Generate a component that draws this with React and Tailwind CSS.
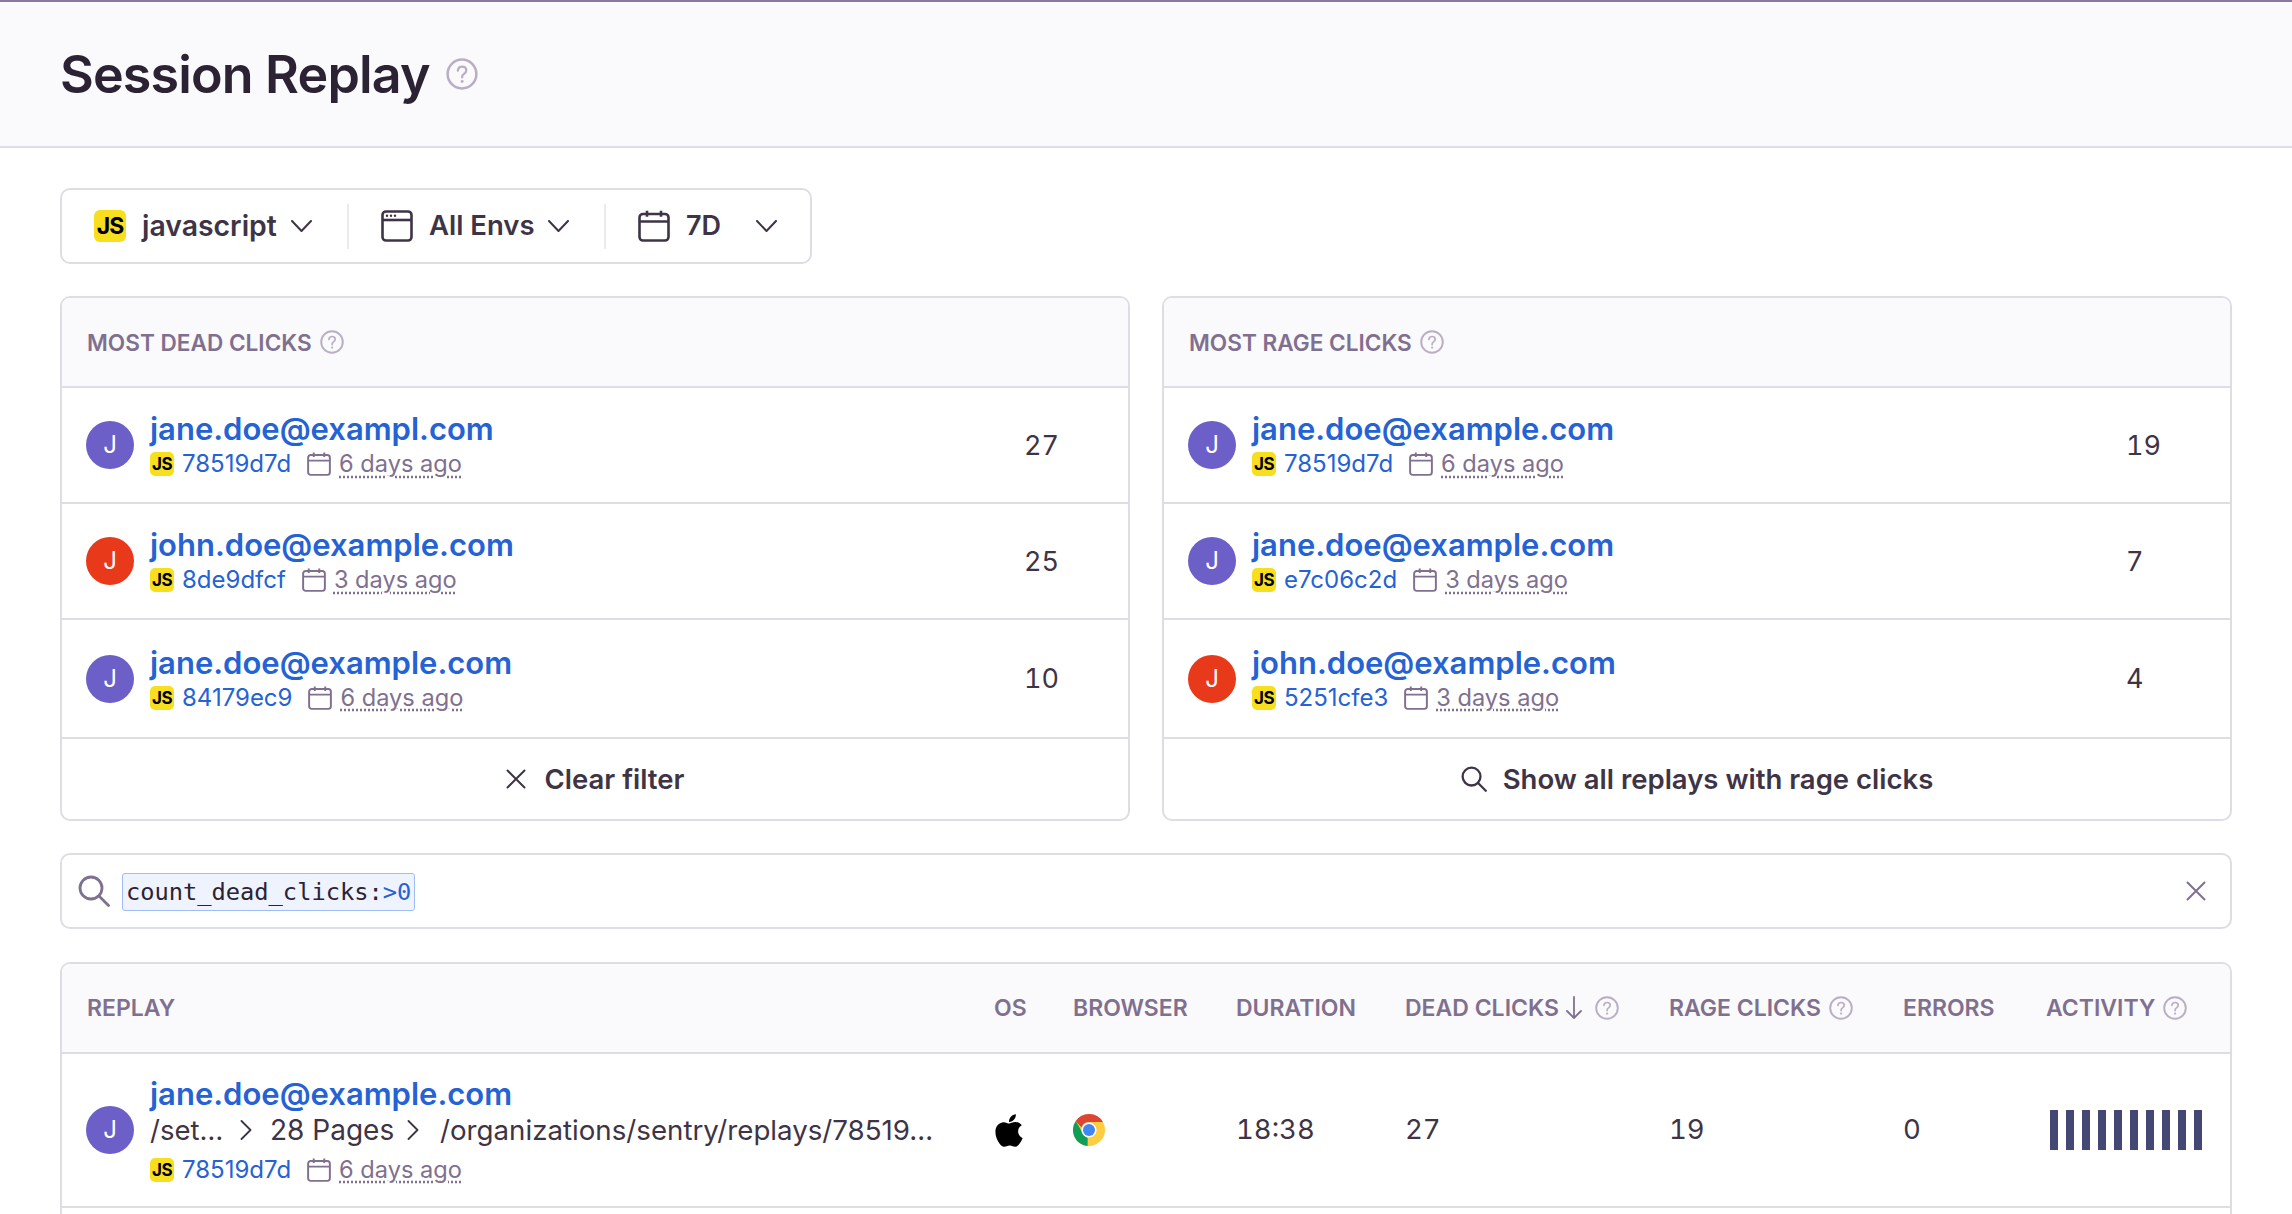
import React from "react";
import { FaApple } from "react-icons/fa";

const HelpIcon = ({ className }) => (
  <svg viewBox="0 0 24 24" fill="none" className={className}>
    <circle cx="12" cy="12" r="10.8" stroke="currentColor" strokeWidth="1.9" />
    <path d="M8.9 9.4c.2-1.8 1.5-2.9 3.2-2.9 1.8 0 3.1 1.1 3.1 2.7 0 1.3-.7 2-1.7 2.7-.9.6-1.4 1.1-1.4 2.2v.5" stroke="currentColor" strokeWidth="1.7" strokeLinecap="round" />
    <circle cx="12.1" cy="17.6" r="1.1" fill="currentColor" />
  </svg>
);

const ChevronDown = ({ className }) => (
  <svg viewBox="0 0 21 12" fill="none" className={className}>
    <path d="M1 1l9.5 10L20 1" stroke="currentColor" strokeWidth="2" strokeLinecap="round" strokeLinejoin="round" />
  </svg>
);

const ChevronRight = ({ className = "" }) => (
  <svg viewBox="0 0 12 20" fill="none" className={`w-3 h-5 shrink-0 text-[#3e3446] ${className}`}>
    <path d="M1.5 1l9 9-9 9" stroke="currentColor" strokeWidth="1.8" strokeLinecap="round" strokeLinejoin="round" />
  </svg>
);

const CalendarIcon = ({ className }) => (
  <svg viewBox="0 0 32 32" fill="none" className={className}>
    <rect x="1.5" y="4" width="29" height="26.5" rx="3.5" stroke="currentColor" strokeWidth="2.6" />
    <path d="M1.5 11.5h29M9 .8v6M23 .8v6" stroke="currentColor" strokeWidth="2.6" />
  </svg>
);

const BrowserIcon = ({ className }) => (
  <svg viewBox="0 0 32 32" fill="none" className={className}>
    <rect x="1.5" y="1.5" width="29" height="29" rx="3.5" stroke="currentColor" strokeWidth="2.6" />
    <path d="M1.5 10h29" stroke="currentColor" strokeWidth="2.6" />
    <circle cx="6" cy="5.8" r="1.2" fill="currentColor" />
    <circle cx="10" cy="5.8" r="1.2" fill="currentColor" />
    <circle cx="14" cy="5.8" r="1.2" fill="currentColor" />
  </svg>
);

const SearchIcon = ({ className }) => (
  <svg viewBox="0 0 32 32" fill="none" className={className}>
    <circle cx="13" cy="13" r="11" stroke="currentColor" strokeWidth="2.8" />
    <path d="M21 21l9.5 9.5" stroke="currentColor" strokeWidth="2.8" strokeLinecap="round" />
  </svg>
);

const CloseIcon = ({ className }) => (
  <svg viewBox="0 0 20 20" fill="none" className={className}>
    <path d="M1.5 1.5l17 17M18.5 1.5l-17 17" stroke="currentColor" strokeWidth="2" strokeLinecap="round" />
  </svg>
);

const ArrowDown = ({ className }) => (
  <svg viewBox="0 0 18 24" fill="none" className={className}>
    <path d="M9 1v21M2 15l7 7 7-7" stroke="currentColor" strokeWidth="1.8" strokeLinecap="round" strokeLinejoin="round" />
  </svg>
);

const ChromeIcon = ({ className }) => (
  <svg viewBox="0 0 32 32" className={className}>
    <circle cx="16" cy="16" r="16" fill="#ffcd40" />
    <path d="M16 0a16 16 0 0 1 13.9 8H16a8 8 0 0 0-7.6 5.6L2.8 7A16 16 0 0 1 16 0z" fill="#db4437" />
    <path d="M2.8 7l6.9 12a8 8 0 0 0 5 4.9L14.6 32A16 16 0 0 1 2.8 7z" fill="#0f9d58" />
    <circle cx="16" cy="16" r="7.6" fill="#fff" />
    <circle cx="16" cy="16" r="6" fill="#4285f4" />
  </svg>
);

const JsIcon = ({ size = "small" }) => (
  <span
    className={`shrink-0 flex items-center justify-center bg-[#f7df1e] text-black font-bold ${
      size === "small"
        ? "w-6 h-6 rounded-[5px] text-[17px] tracking-[-0.5px]"
        : "w-8 h-8 rounded-[6px] text-[23px] tracking-[-1px]"
    }`}
  >
    JS
  </span>
);

const Avatar = ({ color }) => (
  <span className={`w-12 h-12 rounded-full shrink-0 flex items-center justify-center text-white text-[24px] ${color}`}>
    J
  </span>
);

const PURPLE = "bg-[#6c5fc7]";
const RED = "bg-[#e8391a]";

const Meta = ({ hash, time, className = "" }) => (
  <div className={`flex items-center text-[24px] leading-[30px] ${className}`}>
    <JsIcon />
    <span className="ml-2 text-[#2562d4]">{hash}</span>
    <CalendarIcon className="ml-4 w-6 h-6 text-[#80708f]" />
    <span className="ml-2 text-[23.6px] text-[#80708f] underline decoration-dotted decoration-[#80708f] underline-offset-4">
      {time}
    </span>
  </div>
);

const ClickRow = ({ name, color, hash, time, count, height }) => (
  <div className={`flex items-center pl-[24px] border-b-2 border-[#e0dce5] ${height}`}>
    <Avatar color={color} />
    <div className="ml-4 flex flex-col w-[874px]">
      <span className="text-[31px] leading-[36px] font-semibold text-[#2562d4]">{name}</span>
      <Meta hash={hash} time={time} className="mt-[2px]" />
    </div>
    <span className="pt-[2px] text-[27px] tabular-nums text-[#3e3446]">{count}</span>
  </div>
);

const ClickPanel = ({ title, rows, footer }) => (
  <div className="border-2 border-[#e0dce5] rounded-[10px] overflow-hidden">
    <div className="h-[90px] flex items-center gap-2 pl-[25px] bg-[#faf9fb] border-b-2 border-[#e0dce5]">
      <span className="pt-[1px] text-[22.6px] font-semibold text-[#80708f] uppercase">{title}</span>
      <HelpIcon className="w-6 h-6 text-[#b9aec4]" />
    </div>
    {rows.map((r, i) => (
      <ClickRow key={i} {...r} height={i === 2 ? "h-[119px]" : "h-[116px]"} />
    ))}
    <div className="h-[80px] flex items-center justify-center gap-4 text-[27.5px] font-semibold text-[#3e3446]">
      {footer}
    </div>
  </div>
);

const HeaderCell = ({ children, help }) => (
  <div className="flex items-center gap-2 pl-[25px] text-[23px] font-semibold text-[#80708f] uppercase">
    <span>{children}</span>
    {help && <HelpIcon className="w-6 h-6 text-[#b9aec4]" />}
  </div>
);

const tableCols = "grid-cols-[907px_79px_163px_169px_264px_234px_143px_1fr]";

const deadRows = [
  { name: "jane.doe@exampl.com", color: PURPLE, hash: "78519d7d", time: "6 days ago", count: 27 },
  { name: "john.doe@example.com", color: RED, hash: "8de9dfcf", time: "3 days ago", count: 25 },
  { name: "jane.doe@example.com", color: PURPLE, hash: "84179ec9", time: "6 days ago", count: 10 },
];

const rageRows = [
  { name: "jane.doe@example.com", color: PURPLE, hash: "78519d7d", time: "6 days ago", count: 19 },
  { name: "jane.doe@example.com", color: PURPLE, hash: "e7c06c2d", time: "3 days ago", count: 7 },
  { name: "john.doe@example.com", color: RED, hash: "5251cfe3", time: "3 days ago", count: 4 },
];

const App = () => {
  return (
    <div className="h-[1214px] overflow-hidden bg-white font-['Inter',sans-serif] text-[#3e3446]">
      {/* page header */}
      <div className="h-[148px] border-t-2 border-t-[#8a76a0] border-b-2 border-b-[#e0dce5] bg-[#faf9fb] flex items-center pl-[60px] gap-4">
        <h1 className="pt-[2px] text-[52px] font-semibold text-[#2b2233] tracking-[-0.85px]">Session Replay</h1>
        <HelpIcon className="w-8 h-8 text-[#b9aec4]" />
      </div>

      <div className="px-[60px] pt-10">
        {/* filters */}
        <div className="w-[752px] h-[76px] border-2 border-[#e0dce5] rounded-[10px] flex items-center font-semibold">
          <div className="flex items-center w-[285px] pl-[32px] text-[28.4px]">
            <JsIcon size="large" />
            <span className="ml-4">javascript</span>
            <ChevronDown className="ml-[14px] w-[21px] h-3" />
          </div>
          <div className="w-0.5 h-[45px] bg-[#ece9ef]" />
          <div className="flex items-center w-[255px] pl-[32px] text-[27.5px]">
            <BrowserIcon className="w-8 h-8" />
            <span className="ml-4">All Envs</span>
            <ChevronDown className="ml-[13px] w-[21px] h-3" />
          </div>
          <div className="w-0.5 h-[45px] bg-[#ece9ef]" />
          <div className="flex items-center pl-[32px] text-[27px]">
            <CalendarIcon className="w-8 h-8" />
            <span className="ml-4 w-[70px]">7D</span>
            <ChevronDown className="w-[21px] h-3" />
          </div>
        </div>

        {/* panels */}
        <div className="grid grid-cols-2 gap-8 mt-8">
          <ClickPanel
            title="Most Dead Clicks"
            rows={deadRows}
            footer={
              <>
                <CloseIcon className="w-5 h-5" />
                <span className="pt-[2px] ml-[3px]">Clear filter</span>
              </>
            }
          />
          <ClickPanel
            title="Most Rage Clicks"
            rows={rageRows}
            footer={
              <>
                <SearchIcon className="w-[26px] h-[26px]" />
                <span className="pt-[2px]">Show all replays with rage clicks</span>
              </>
            }
          />
        </div>

        {/* search */}
        <div className="h-[76px] mt-8 border-2 border-[#e0dce5] rounded-[10px] flex items-center pl-4 pr-6">
          <SearchIcon className="w-8 h-8 text-[#80708f]" />
          <span className="ml-3 mt-[1px] h-[38px] flex items-center pt-[2px] px-[3px] bg-[#eff3fe] border border-[#a0bcf5] rounded-[3px] font-['DejaVu_Sans_Mono',monospace] text-[23.7px] text-[#2b2233]">
            count_dead_clicks:<span className="text-[#2562d4]">&gt;0</span>
          </span>
          <CloseIcon className="ml-auto w-5 h-5 text-[#80708f]" />
        </div>

        {/* replay table */}
        <div className="h-[300px] mt-[33px] border-2 border-[#e0dce5] rounded-[10px] overflow-hidden">
          <div className={`grid ${tableCols} h-[90px] bg-[#faf9fb] border-b-2 border-[#e0dce5]`}>
            <HeaderCell>Replay</HeaderCell>
            <HeaderCell>OS</HeaderCell>
            <HeaderCell>Browser</HeaderCell>
            <HeaderCell>Duration</HeaderCell>
            <div className="flex items-center pl-[25px] text-[23px] font-semibold text-[#80708f] uppercase">
              <span>Dead Clicks</span>
              <ArrowDown className="ml-[6px] w-[18px] h-6" />
              <HelpIcon className="ml-[12px] w-6 h-6 text-[#b9aec4]" />
            </div>
            <HeaderCell help>Rage Clicks</HeaderCell>
            <HeaderCell>Errors</HeaderCell>
            <HeaderCell help>Activity</HeaderCell>
          </div>
          <div className={`grid ${tableCols} h-[154px] border-b-2 border-[#e0dce5] items-center text-[27.5px]`}>
            <div className="flex items-center pl-[24px]">
              <Avatar color={PURPLE} />
              <div className="ml-4 flex flex-col min-w-0 w-[820px]">
                <span className="text-[31px] leading-[36px] font-semibold text-[#2562d4]">jane.doe@example.com</span>
                <div className="flex items-center leading-[37px] whitespace-nowrap">
                  <span className="w-[90px]">/set…</span>
                  <ChevronRight />
                  <span className="ml-[18px] w-[119px] text-[28px]">28 Pages</span>
                  <ChevronRight className="ml-[18px]" />
                  <span className="ml-[21px] text-[27.7px]">/organizations/sentry/replays/78519…</span>
                </div>
                <Meta hash="78519d7d" time="6 days ago" className="mt-[6px]" />
              </div>
            </div>
            <div className="pl-[26px]">
              <FaApple className="w-[28px] h-[37px] text-black" />
            </div>
            <div className="pl-[25px]">
              <ChromeIcon className="w-8 h-8" />
            </div>
            <div className="pl-[25px] tabular-nums">18:38</div>
            <div className="pl-[25px] tabular-nums">27</div>
            <div className="pl-[25px] tabular-nums">19</div>
            <div className="pl-[25px] tabular-nums">0</div>
            <div className="pl-[29px] flex gap-2">
              {Array.from({ length: 10 }).map((_, i) => (
                <span key={i} className="w-2 h-10 bg-[#444674]" />
              ))}
            </div>
          </div>
        </div>
      </div>
    </div>
  );
};

export default App;
